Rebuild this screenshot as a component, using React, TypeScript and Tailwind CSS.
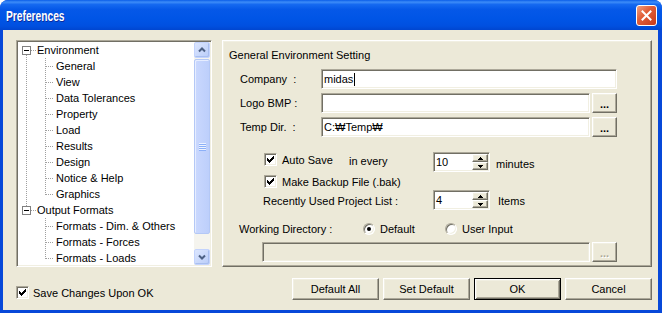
import React from 'react';

// classic 3D edges
const sunken =
  'border border-t-[#ACA899] border-l-[#ACA899] border-r-white border-b-white shadow-[inset_1px_1px_0_#716F64,inset_-1px_-1px_0_#F1EFE2]';
const raised =
  'border border-t-white border-l-white border-r-[#716F64] border-b-[#716F64] shadow-[inset_-1px_-1px_0_#ACA899,inset_1px_1px_0_#F1EFE2]';

const treeRows = [
  { label: 'Environment', level: 0 },
  { label: 'General', level: 1 },
  { label: 'View', level: 1 },
  { label: 'Data Tolerances', level: 1 },
  { label: 'Property', level: 1 },
  { label: 'Load', level: 1 },
  { label: 'Results', level: 1 },
  { label: 'Design', level: 1 },
  { label: 'Notice & Help', level: 1 },
  { label: 'Graphics', level: 1 },
  { label: 'Output Formats', level: 0 },
  { label: 'Formats - Dim. & Others', level: 1 },
  { label: 'Formats - Forces', level: 1 },
  { label: 'Formats - Loads', level: 1 },
];

function CheckBox({ checked }: { checked?: boolean }) {
  return (
    <span className={`w-[13px] h-[13px] shrink-0 bg-white flex items-center justify-center ${sunken}`}>
      {checked && (
        <svg width="7" height="7" viewBox="0 0 7 7" shapeRendering="crispEdges">
          <path
            d="M0 2h1v3H0z M1 3h1v3H1z M2 4h1v3H2z M3 3h1v3H3z M4 2h1v3H4z M5 1h1v3H5z M6 0h1v3H6z"
            fill="#000"
          />
        </svg>
      )}
    </span>
  );
}

function Radio({ checked }: { checked?: boolean }) {
  return (
    <span className="w-[12px] h-[12px] shrink-0 rounded-full bg-white flex items-center justify-center border border-t-[#ACA899] border-l-[#ACA899] border-r-white border-b-white shadow-[inset_1px_1px_0_#716F64,inset_-1px_-1px_0_#F1EFE2]">
      {checked && <span className="w-[4px] h-[4px] rounded-full bg-black" />}
    </span>
  );
}

function DotsButton({ disabled }: { disabled?: boolean }) {
  return (
    <div className={`w-[25px] h-[20px] flex items-center justify-center bg-[#ECE9D8] ${raised}`}>
      <span
        className={`font-bold leading-none pt-[3px] ${disabled ? 'text-[#ACA899] [text-shadow:1px_1px_0_#fff]' : 'text-black'}`}
      >
        ...
      </span>
    </div>
  );
}

function Spinner({ value }: { value: string }) {
  return (
    <div className={`w-[57px] h-[20px] bg-white flex ${sunken} p-px`}>
      <span className="flex-1 pl-[1px] leading-[16px]">{value}</span>
      <div className="w-[16px] flex flex-col">
        <div className={`h-[8px] flex items-center justify-center bg-[#ECE9D8] ${raised}`}>
          <svg width="5" height="3" viewBox="0 0 5 3">
            <path d="M2 0h1v1h1v1h1v1H0V2h1V1h1z" fill="#000" />
          </svg>
        </div>
        <div className={`h-[8px] flex items-center justify-center bg-[#ECE9D8] ${raised}`}>
          <svg width="5" height="3" viewBox="0 0 5 3">
            <path d="M0 0h5v1H4v1H3v1H2V2H1V1H0z" fill="#000" />
          </svg>
        </div>
      </div>
    </div>
  );
}

function ScrollButton({ down }: { down?: boolean }) {
  return (
    <div className="h-[16px] rounded-[2px] border border-[#C3D3FD] bg-[linear-gradient(135deg,#DCE6FE,#BACDF9)] shadow-[inset_-1px_-1px_0_#A9BFEF] flex items-center justify-center">
      <svg width="8" height="6" viewBox="0 0 8 6">
        <path d={down ? 'M1 1.5 L4 4.5 L7 1.5' : 'M1 4.5 L4 1.5 L7 4.5'} stroke="#4D6185" strokeWidth="2" fill="none" />
      </svg>
    </div>
  );
}

function Tree() {
  const rowY = (i: number) => 8 + 16 * i + 0.5;
  return (
    <div className={`w-[196px] h-[227px] flex bg-white p-px ${sunken}`}>
      <div className="relative flex-1 overflow-hidden">
        <svg className="absolute left-0 top-0" width="176" height="223" shapeRendering="crispEdges">
          <g stroke="#A0A0A0" strokeDasharray="1 1">
            <line x1="8.5" y1="13" x2="8.5" y2="164" />
            <line x1="13" y1={rowY(0)} x2="18" y2={rowY(0)} />
            <line x1="13" y1={rowY(10)} x2="18" y2={rowY(10)} />
            <line x1="27.5" y1="16" x2="27.5" y2={rowY(9)} />
            <line x1="27.5" y1="176" x2="27.5" y2={rowY(13)} />
            {treeRows.map((r, i) =>
              r.level === 1 ? <line key={i} x1="28" y1={rowY(i)} x2="36" y2={rowY(i)} /> : null
            )}
          </g>
          {[0, 10].map((i) => (
            <g key={i}>
              <rect x="4.5" y={rowY(i) - 4} width="8" height="8" fill="#fff" stroke="#808080" />
              <line x1="6" y1={rowY(i)} x2="11" y2={rowY(i)} stroke="#000" />
            </g>
          ))}
        </svg>
        <div className="relative flex flex-col">
          {treeRows.map((r) => (
            <div
              key={r.label}
              className={`h-[16px] leading-[16px] whitespace-nowrap ${r.level === 0 ? 'pl-[19px]' : 'pl-[38px]'}`}
            >
              {r.label}
            </div>
          ))}
        </div>
      </div>
      <div className="w-[16px] flex flex-col bg-[#F5F4EE]">
        <ScrollButton />
        <div className="flex-1 pt-px">
          <div className="h-[175px] rounded-[2px] border border-[#B4C8F6] bg-[linear-gradient(90deg,#CAD8FE,#BDCFFB)] shadow-[inset_1px_1px_0_#E6EDFF] flex flex-col items-center justify-center gap-[1px]">
            {[0, 1, 2, 3].map((i) => (
              <span key={i} className="w-[7px] h-px bg-[#EEF3FF] shadow-[0_1px_0_#8CB0F8]" />
            ))}
          </div>
        </div>
        <ScrollButton down />
      </div>
    </div>
  );
}

function SettingsPanel() {
  return (
    <div className={`w-[430px] h-[227px] flex flex-col ${raised}`}>
      <div className="pt-[7px] pl-[6px] h-[21px] leading-[14px]">General Environment Setting</div>

      <div className="flex items-center h-[20px] mt-[7px] pl-[17px]">
        <span className="w-[81px]">Company &nbsp;:</span>
        <div className={`w-[296px] h-[20px] bg-white flex items-center pl-[2px] ${sunken}`}>
          <span>midas</span>
          <span className="w-px h-[13px] bg-black ml-px" />
        </div>
      </div>

      <div className="flex items-center h-[20px] mt-[4px] pl-[17px]">
        <span className="w-[81px]">Logo BMP :</span>
        <div className={`w-[269px] h-[20px] bg-white ${sunken}`} />
        <div className="ml-[2px]">
          <DotsButton />
        </div>
      </div>

      <div className="flex items-center h-[20px] mt-[4px] pl-[17px]">
        <span className="w-[81px]">Temp Dir. &nbsp;:</span>
        <div className={`w-[269px] h-[20px] bg-white flex items-center pl-[2px] ${sunken}`}>C:₩Temp₩</div>
        <div className="ml-[2px]">
          <DotsButton />
        </div>
      </div>

      <div className="flex items-start h-[20px] mt-[15px] pl-[41px]">
        <div className="w-[85px] flex items-center gap-[5px] h-[14px]">
          <CheckBox checked />
          <span className="leading-[14px] mt-[2px]">Auto Save</span>
        </div>
        <span className="w-[84px] leading-[14px] mt-[2px]">in every</span>
        <Spinner value="10" />
        <span className="ml-[6px] leading-[14px] mt-[5px]">minutes</span>
      </div>

      <div className="flex items-center gap-[5px] h-[13px] mt-[3px] pl-[41px]">
        <CheckBox checked />
        <span className="leading-[14px] mt-[1px]">Make Backup File (.bak)</span>
      </div>

      <div className="flex items-center h-[20px] mt-[2px] pl-[40px]">
        <span className="w-[170px] mt-[3px]">Recently Used Project List :</span>
        <Spinner value="4" />
        <span className="ml-[8px] mt-[3px]">Items</span>
      </div>

      <div className="flex items-center h-[14px] mt-[12px] pl-[16px]">
        <span className="w-[124px] mt-[1px]">Working Directory :</span>
        <div className="w-[82px] flex items-center gap-[5px]">
          <Radio checked />
          <span>Default</span>
        </div>
        <div className="flex items-center gap-[5px]">
          <Radio />
          <span>User Input</span>
        </div>
      </div>

      <div className="flex items-center h-[20px] mt-[6px] pl-[39px]">
        <div className={`w-[328px] h-[20px] bg-[#ECE9D8] ${sunken}`} />
        <div className="ml-[2px]">
          <DotsButton disabled />
        </div>
      </div>
    </div>
  );
}

function PushButton({ label, isDefault }: { label: string; isDefault?: boolean }) {
  const edge = isDefault
    ? 'border border-black shadow-[inset_1px_1px_0_#fff,inset_-1px_-1px_0_#716F64,inset_2px_2px_0_#F1EFE2,inset_-2px_-2px_0_#ACA899]'
    : raised;
  return (
    <div className={`w-[87px] h-[22px] flex items-center justify-center bg-[#ECE9D8] ${edge}`}>{label}</div>
  );
}

export default function App() {
  return (
    <div className="w-[662px] h-[313px] flex flex-col bg-[#0748D9] rounded-t-[8px] overflow-hidden font-['Liberation_Sans',Arial,sans-serif] text-[11px] text-black">
      <div className="h-[30px] shrink-0 flex items-center pl-[6px] pr-[5px] bg-[linear-gradient(to_bottom,#0A5DE8_0%,#3D8CF8_7%,#1569F0_15%,#0558E8_32%,#0055E6_62%,#0050E0_86%,#0046D0_100%)]">
        <span className="inline-block origin-left scale-x-[0.73] text-white font-bold text-[14px] leading-none mt-[1px] [text-shadow:1px_1px_0_#0A2A9E]">
          Preferences
        </span>
        <div className="ml-auto w-[21px] h-[21px] rounded-[3px] border border-white bg-[linear-gradient(135deg,#F0A080_0%,#E2603A_40%,#C8391B_100%)] flex items-center justify-center">
          <svg width="11" height="11" viewBox="0 0 11 11">
            <path d="M1.5 1.5 L9.5 9.5 M9.5 1.5 L1.5 9.5" stroke="#fff" strokeWidth="2" strokeLinecap="square" />
          </svg>
        </div>
      </div>

      <div className="flex-1 ml-[3px] mr-[4px] mb-[3px] bg-[#ECE9D8] flex flex-col">
        <div className="flex gap-[10px] mt-[10px] pl-[13px]">
          <Tree />
          <SettingsPanel />
        </div>

        <div className="flex items-start mt-[11px] pl-[13px] pr-[6px]">
          <div className="flex items-center gap-[4px] mt-[6px]">
            <CheckBox checked />
            <span className="mt-[1px]">Save Changes Upon OK</span>
          </div>
          <div className="ml-auto flex gap-[4px]">
            <PushButton label="Default All" />
            <PushButton label="Set Default" />
            <PushButton label="OK" isDefault />
            <PushButton label="Cancel" />
          </div>
        </div>
      </div>
    </div>
  );
}
